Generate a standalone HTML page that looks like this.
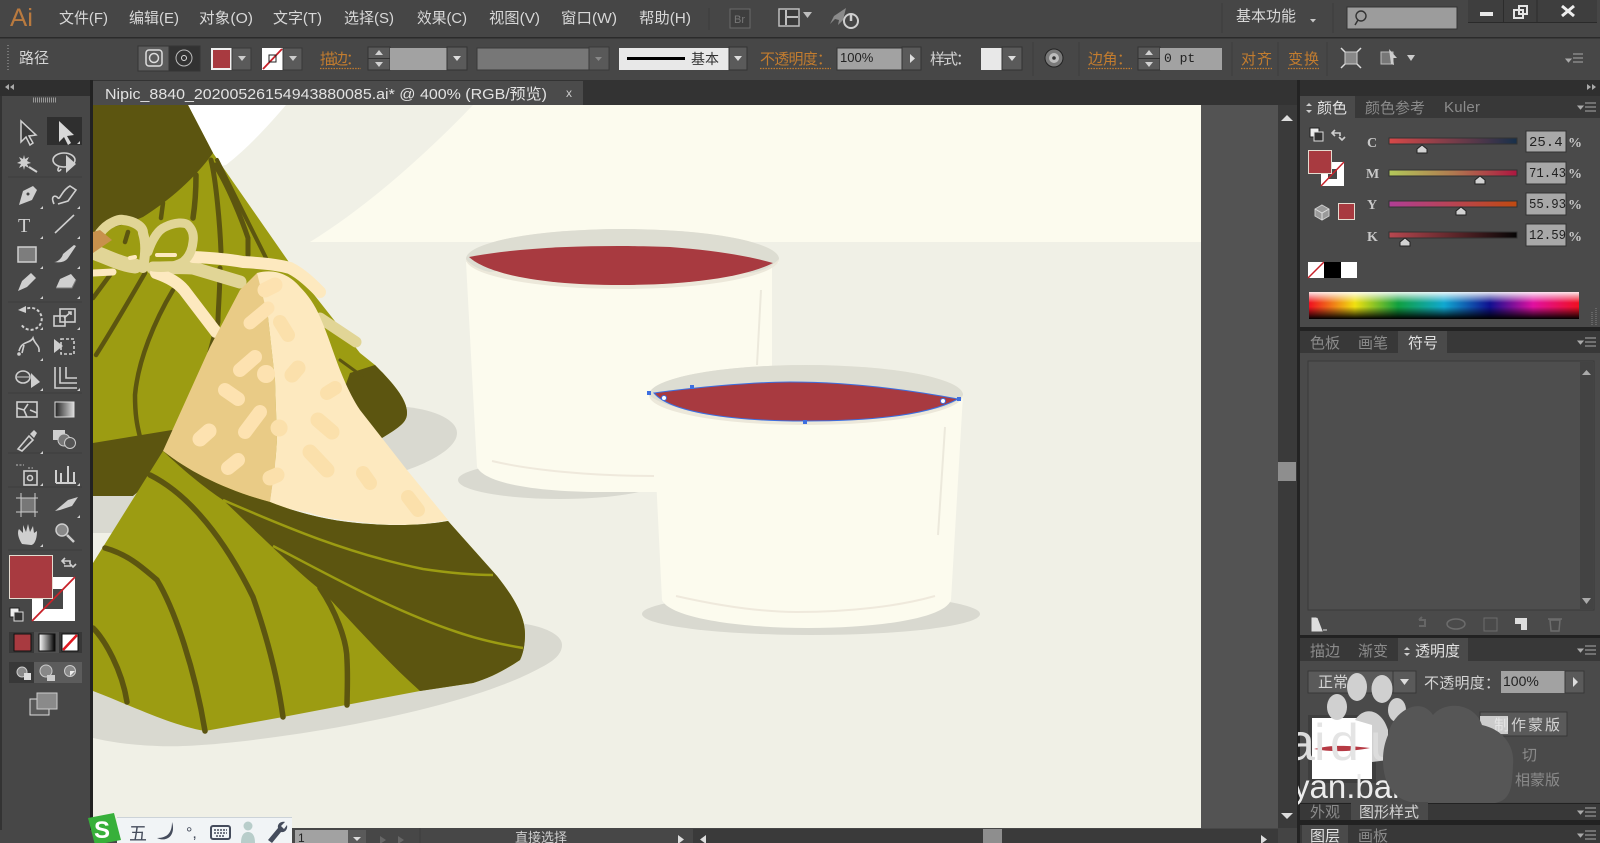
<!DOCTYPE html>
<html lang="zh"><head><meta charset="utf-8"><title>Adobe Illustrator</title>
<style>
html,body{margin:0;padding:0;width:1600px;height:843px;overflow:hidden;background:#474747}
svg{display:block;position:absolute;left:0;top:0;filter:blur(.35px)}
text{font-family:"Liberation Sans","Noto Sans CJK SC",sans-serif}
.m{font-size:15px;fill:#d8d8d8}
.o{font-size:15px;fill:#c27c2f}
.w{font-size:15px;fill:#d4d4d4}
.t{font-size:15px;fill:#8b8b8b}
.a{font-size:15px;fill:#e2e2e2}
.ic{fill:none;stroke:#cfcfcf;stroke-width:1.6}
.f{fill:#cfcfcf}
.sep{stroke:#3c3c3c;stroke-width:1}
.leaf{fill:none;stroke:#5c5510;stroke-linecap:round}
.str{fill:none;stroke-linecap:round;stroke-linejoin:round}
</style></head><body>
<svg width="1600" height="843" viewBox="0 0 1600 843" xmlns="http://www.w3.org/2000/svg">
<defs>
<linearGradient id="gr" x1="0" x2="1" y1="0" y2="0"><stop offset="0" stop-color="#222"/><stop offset="1" stop-color="#ddd"/></linearGradient>
<linearGradient id="gb" x1="0" x2="1" y1="0" y2="0"><stop offset="0" stop-color="#fff"/><stop offset="1" stop-color="#000"/></linearGradient>
<linearGradient id="c" x1="0" x2="1"><stop offset="0" stop-color="#d84848"/><stop offset="1" stop-color="#17304a"/></linearGradient>
<linearGradient id="mm" x1="0" x2="1"><stop offset="0" stop-color="#b3c95a"/><stop offset=".5" stop-color="#b07a50"/><stop offset="1" stop-color="#ad1640"/></linearGradient>
<linearGradient id="y" x1="0" x2="1"><stop offset="0" stop-color="#b03e96"/><stop offset="1" stop-color="#c04a10"/></linearGradient>
<linearGradient id="k" x1="0" x2="1"><stop offset="0" stop-color="#b84850"/><stop offset="1" stop-color="#050505"/></linearGradient>
<linearGradient id="sp" x1="0" x2="1"><stop offset="0" stop-color="#f01020"/><stop offset=".17" stop-color="#f0e010"/><stop offset=".33" stop-color="#10a040"/><stop offset=".5" stop-color="#10a8d0"/><stop offset=".67" stop-color="#101090"/><stop offset=".83" stop-color="#e010a0"/><stop offset="1" stop-color="#f01020"/></linearGradient>
<linearGradient id="sw" x1="0" x2="0" y1="0" y2="1"><stop offset="0" stop-color="#fff" stop-opacity=".9"/><stop offset=".4" stop-color="#fff" stop-opacity="0"/><stop offset=".55" stop-color="#000" stop-opacity="0"/><stop offset="1" stop-color="#000"/></linearGradient>
<clipPath id="art"><rect x="93" y="105" width="1108" height="725"/></clipPath>
<clipPath id="wm"><rect x="1298" y="660" width="302" height="183"/></clipPath>
</defs>

<!-- base -->
<rect width="1600" height="843" fill="#474747"/>
<rect y="0" width="1600" height="37" fill="#464646"/>
<rect y="37" width="1600" height="1.5" fill="#2b2b2b"/>
<rect y="38.500" width="1600" height="41.500" fill="#474747"/>
<rect y="80" width="1600" height="25" fill="#333"/>

<!-- title bar -->
<text x="10" y="26" fill="#b97a3f" style="font-size:25px" textLength="23" lengthAdjust="spacingAndGlyphs">Ai</text>
<text class="m" x="59" y="23" textLength="49" lengthAdjust="spacingAndGlyphs">文件(F)</text>
<text class="m" x="129" y="23" textLength="50" lengthAdjust="spacingAndGlyphs">编辑(E)</text>
<text class="m" x="199" y="23" textLength="54" lengthAdjust="spacingAndGlyphs">对象(O)</text>
<text class="m" x="273" y="23" textLength="49" lengthAdjust="spacingAndGlyphs">文字(T)</text>
<text class="m" x="344" y="23" textLength="50" lengthAdjust="spacingAndGlyphs">选择(S)</text>
<text class="m" x="417" y="23" textLength="50" lengthAdjust="spacingAndGlyphs">效果(C)</text>
<text class="m" x="489" y="23" textLength="51" lengthAdjust="spacingAndGlyphs">视图(V)</text>
<text class="m" x="561" y="23" textLength="56" lengthAdjust="spacingAndGlyphs">窗口(W)</text>
<text class="m" x="639" y="23" textLength="52" lengthAdjust="spacingAndGlyphs">帮助(H)</text>
<path class="sep" d="M709 8V30M1222 3V33M1333 3V33"/>
<rect x="730" y="9" width="20" height="19" fill="#3e3e3e" stroke="#6a6a6a"/>
<text x="734" y="23" style="font-size:11px" fill="#777">Br</text>
<rect x="779" y="9" width="20" height="17" fill="#3a3a3a" stroke="#bdbdbd" stroke-width="1.5"/><path d="M786 10v15M786 17h12" stroke="#bdbdbd" stroke-width="2"/>
<path d="M803 12h9l-4.500 6z" fill="#bdbdbd"/>
<path d="M830 24l4-8 12-8-3 12-5 5 1-5-4-1z" fill="#8a8a8a"/>
<circle cx="851" cy="21" r="7" fill="none" stroke="#cfcfcf" stroke-width="2"/><path d="M851 15v6" stroke="#cfcfcf" stroke-width="2.500"/>
<text class="m" x="1236" y="21" textLength="60" lengthAdjust="spacingAndGlyphs">基本功能</text>
<path d="M1310 19h6l-3 3.500z" fill="#c8c8c8"/>
<rect x="1347" y="7" width="110" height="22" fill="#9c9c9c" stroke="#333"/>
<circle cx="1361" cy="16" r="5" fill="none" stroke="#333" stroke-width="1.400"/><path d="M1358 20l-3 5" stroke="#333" stroke-width="1.500"/>
<rect x="1468" y="0" width="129" height="22" fill="#3e3e3e"/>
<path d="M1503.500 0v22M1537 0v22" stroke="#2c2c2c"/><rect x="1468" y="22" width="129" height="1" fill="#2a2a2a"/>
<rect x="1480" y="12" width="13" height="4" fill="#e8e8e8"/>
<rect x="1514" y="10" width="9" height="8" fill="none" stroke="#e4e4e4" stroke-width="2"/><rect x="1519" y="6" width="8" height="8" fill="none" stroke="#e4e4e4" stroke-width="2"/>
<path d="M1562 6L1574 16M1574 6L1562 16" stroke="#eee" stroke-width="3"/>

<!-- control bar -->
<path d="M8 45V71" stroke="#777" stroke-width="2" stroke-dasharray="1 2"/>
<text x="19" y="63" class="w">路径</text>
<rect x="138" y="46" width="31" height="25" fill="#5c5c5c" stroke="#353535"/><rect x="169" y="46" width="31" height="25" fill="#323232" stroke="#353535"/>
<rect x="146" y="50" width="16" height="16" rx="3" fill="none" stroke="#ddd" stroke-width="1.500"/><circle cx="154" cy="58" r="4.500" fill="none" stroke="#ddd" stroke-width="1.500"/>
<circle cx="184" cy="58" r="8" fill="none" stroke="#bbb"/><circle cx="184" cy="58" r="2.500" fill="none" stroke="#ddd"/>
<rect x="211" y="48" width="21" height="22" fill="#f0f0f0"/><rect x="213" y="50" width="17" height="18" fill="#a83a40"/>
<rect x="232" y="48" width="19" height="22" fill="#5a5a5a" stroke="#383838"/><path d="M238 56h8l-4 5z" fill="#ccc"/>
<rect x="262" y="48" width="21" height="22" fill="#fff"/><path d="M263 69L282 49" stroke="#c8222a" stroke-width="1.800"/><rect x="269" y="55" width="7" height="7" fill="none" stroke="#222"/>
<rect x="283" y="48" width="19" height="22" fill="#5a5a5a" stroke="#383838"/><path d="M289 56h8l-4 5z" fill="#ccc"/>
<text class="o" x="320" y="64" textLength="41">描边：</text>
<rect x="368" y="47" width="22" height="23" fill="#5a5a5a" stroke="#333"/><path d="M368 58.500h22" stroke="#333"/><path d="M375 55l4-5 4 5zM375 62l4 5 4-5z" fill="#d0d0d0"/>
<rect x="390" y="48" width="57" height="22" fill="#a2a2a2"/>
<rect x="447" y="47" width="20" height="23" fill="#5a5a5a" stroke="#333"/><path d="M453 56h8l-4 5z" fill="#ddd"/>
<rect x="477" y="48" width="112" height="22" fill="#777" stroke="#3a3a3a"/>
<rect x="589" y="47" width="20" height="23" fill="#595959" stroke="#3a3a3a"/><path d="M595 57h7l-3.500 4z" fill="#888"/>
<rect x="619" y="48" width="110" height="22" fill="#e8e8e8"/><rect x="627" y="57" width="58" height="3" fill="#000"/>
<text x="691" y="64" style="font-size:14px" fill="#333">基本</text>
<rect x="729" y="47" width="18" height="23" fill="#5a5a5a" stroke="#333"/><path d="M734 56h8l-4 5z" fill="#ddd"/>
<text class="o" x="760" y="64" textLength="72">不透明度：</text>
<rect x="837" y="48" width="65" height="22" fill="#a2a2a2" stroke="#333"/><text x="840" y="62" style="font-size:13px" fill="#222">100%</text>
<rect x="902" y="47" width="19" height="23" fill="#5a5a5a" stroke="#333"/><path d="M910 54l5 4.500-5 4.500z" fill="#ddd"/>
<text class="w" x="930" y="64" textLength="41">样式：</text>
<rect x="981" y="48" width="21" height="22" fill="#e8e8e8"/>
<rect x="1002" y="47" width="20" height="23" fill="#5a5a5a" stroke="#333"/><path d="M1008 56h8l-4 5z" fill="#ddd"/>
<path class="sep" d="M1033 42V76M1079 42V76M1232 42V76M1278 42V76M1327 42V76"/>
<circle cx="1054" cy="58" r="9" fill="#7a7a7a" stroke="#222"/><circle cx="1054" cy="58" r="5" fill="#bdbdbd"/><circle cx="1054" cy="58" r="1.800" fill="#333"/>
<text class="o" x="1088" y="64" textLength="44">边角：</text>
<rect x="1138" y="47" width="22" height="23" fill="#5a5a5a" stroke="#333"/><path d="M1138 58.500h22" stroke="#333"/><path d="M1145 55l4-5 4 5zM1145 62l4 5 4-5z" fill="#d0d0d0"/>
<rect x="1160" y="48" width="62" height="22" fill="#a2a2a2"/><text x="1164" y="62" style="font-size:13px;font-family:'Liberation Mono',monospace" fill="#222">0 pt</text>
<text class="o" x="1241" y="64" textLength="31">对齐</text>
<text class="o" x="1288" y="64" textLength="31">变换</text>
<path d="M320 68.500h41M760 68.500h71M1088 68.500h44M1241 68.500h31M1288 68.500h31" stroke="#c27c2f" stroke-width="1.200" stroke-dasharray="1.500 1.200"/>
<rect x="1345" y="52" width="12" height="12" fill="#888" stroke="#ccc"/><path d="M1341 48l4 4M1361 48l-4 4M1341 68l4-4M1361 68l-4-4" stroke="#ddd" stroke-width="1.500"/>
<rect x="1381" y="52" width="12" height="12" fill="#777" stroke="#bbb"/><path d="M1389 49l8 9-4 0 1 7-3-1z" fill="#ccc"/>
<path d="M1407 55h8l-4 6z" fill="#ccc"/>
<path d="M1566 59l5 0-2.500 3zM1573 54h10M1573 58h10M1573 62h10" stroke="#aaa" fill="#aaa"/>

<!-- doc tab + left -->
<rect x="0" y="80" width="92" height="16" fill="#2f2f2f"/>
<path d="M9 84l-4 3 4 3zM14 84l-4 3 4 3z" fill="#aaa"/>
<rect x="0" y="96" width="92" height="734" fill="#474747"/>
<rect x="0" y="96" width="2" height="734" fill="#333"/>
<rect x="90" y="80" width="3" height="750" fill="#222"/>
<path d="M33 100h24" stroke="#999" stroke-width="5" stroke-dasharray="1 1"/>
<rect x="93" y="81" width="490" height="24" fill="#4b4b4b"/>
<text class="a" x="105" y="99" textLength="442" lengthAdjust="spacingAndGlyphs">Nipic_8840_20200526154943880085.ai* @ 400% (RGB/预览)</text>
<text x="566" y="97" style="font-size:12px" fill="#ccc">x</text>
<rect x="1275" y="80" width="25" height="25" fill="#333"/>
<rect x="1297" y="80" width="303" height="16" fill="#2f2f2f"/>
<path d="M1587 84l4 3-4 3zM1592 84l4 3-4 3z" fill="#aaa"/>

<!-- canvas -->
<rect x="93" y="105" width="1185" height="725" fill="#535353"/>
<g clip-path="url(#art)">
<rect x="93" y="105" width="1108" height="725" fill="#f0f0e6"/>
<path d="M473 105H1201V242H310C370 205 430 150 473 105Z" fill="#fcfbee"/>
<path d="M188 105H286C266 128 248 148 226 165L200 170Z" fill="#fff"/>
<!-- shadows back -->
<path d="M382 438L407 407C435 410 457 420 457 433C457 448 430 462 407 470L380 470Z" fill="#d9d9d0"/>
<path d="M93 490H180L120 533H93Z" fill="#d9d9d0"/>
<!-- back zongzi -->
<path d="M188 105L213 153L293 268L360 353L375 365C395 385 407 400 407 413C407 422 400 427 382 438L300 460H93V105Z" fill="#9c9c12"/>
<path d="M93 105H188L213 153C195 178 170 200 143 217C125 225 110 228 93 232Z" fill="#5c5510"/>
<path d="M350 373L375 365C395 385 407 400 407 413C407 422 400 427 382 438L320 455Z" fill="#5c5510"/>
<path d="M93 443L172 430L200 440L133 496H93Z" fill="#5c5510"/>
<g class="leaf" stroke-width="4.500">
<path d="M196 175C196 190 195 205 193 218" stroke-width="5.500"/>
<path d="M163 203L161 218"/>
<path d="M211 160C216 180 220 225 221 252" stroke-width="5"/>
<path d="M220 268C220 290 218 310 218 322L210 352" stroke-width="5"/>
<path d="M215 165C228 185 242 220 248 238L248 255" stroke-width="5"/>
<path d="M217 160L266 258" stroke-width="4"/>
<path d="M128 232L125 242"/>
<path d="M110 275L93 298"/>
<path d="M145 273C135 290 115 325 96 355"/>
<path d="M173 290C155 320 138 360 135 395C135 415 137 425 140 437"/>
<path d="M340 360L362 376" stroke-width="3"/>
</g>
<!-- strings behind -->
<path class="str" d="M153 268C170 268 180 267 193 268L240 282" stroke="#e1d596" stroke-width="13"/>
<path class="str" d="M320 318L356 342" stroke="#e1d596" stroke-width="11"/>
<path class="str" d="M156 273C170 278 178 283 184 290L216 332" stroke="#fde9bf" stroke-width="12"/>
<!-- rice -->
<path d="M163 451L210 347L240 290L257 273L280 285L268 317L275 380L277 440L275 467L270 503C225 490 190 472 163 451Z" fill="#e9cb86"/>
<path d="M257 273C275 268 290 275 300 287C308 295 315 305 320 317C328 335 333 352 340 370C346 385 352 398 360 410L407 470L448 520C420 526 390 526 360 522C340 520 325 518 310 513C295 510 282 508 270 503L275 467L277 440L275 380L268 317Z" fill="#fde9bf"/>
<g class="str" stroke="#fde2b0" stroke-width="14">
<path d="M240 370L255 357"/><path d="M266 374h.1" stroke-width="18"/><path d="M225 390L238 399"/><path d="M245 432L260 412"/><path d="M200 439L209 431" stroke-width="15"/><path d="M228 468L238 460"/><path d="M250 323L268 308" stroke-width="13"/><path d="M265 290L275 285" stroke-width="15"/>
</g>
<g class="str" stroke="#fbe0ab" stroke-width="14">
<path d="M280 322L288 335"/><path d="M292 375L298 368" stroke-width="15"/><path d="M327 393L335 388"/><path d="M318 420L332 432" stroke-width="15"/><path d="M279 428h.1" stroke-width="17"/><path d="M310 452L327 470" stroke-width="15"/><path d="M270 478L277 475" stroke-width="15"/><path d="M363 473L370 483"/><path d="M408 497L418 510"/>
</g>
<!-- strings front -->
<path class="str" d="M193 257C215 258 232 260 243 262C262 263 280 265 290 268C302 274 312 284 320 292" stroke="#fde9bf" stroke-width="12"/>
<path class="str" d="M100 233C108 222 120 219 123 220C133 221 143 226 143 233C146 243 146 252 143 268" stroke="#e1d596" stroke-width="10"/>
<path class="str" d="M148 252C152 240 158 230 165 227C175 222 185 222 188 225C193 230 194 236 193 242C192 252 188 258 183 262C172 268 162 268 153 267" stroke="#e1d596" stroke-width="9"/>
<path class="str" d="M93 252C110 258 120 264 135 266" stroke="#e1d596" stroke-width="15"/>
<path class="str" d="M93 273L113 272" stroke="#fde9bf" stroke-width="7"/>
<path class="str" d="M130 258L135 257M157 255L175 255" stroke="#fde9bf" stroke-width="4"/>
<path d="M93 232L100 230L112 240L93 253Z" fill="#c8914c"/>
<!-- shadow front -->
<path d="M510 622C545 625 562 635 562 645C562 655 552 662 540 668C500 690 430 710 350 725C280 738 200 748 157 746C130 745 110 742 93 738V690Z" fill="#d9d9d0"/>
<!-- front zongzi -->
<path d="M163 451C190 472 225 490 270 502C295 512 325 520 357 523C390 526 420 526 448 521L497 576C512 595 525 615 525 634C525 648 522 656 520 660C505 670 490 678 473 683L420 691L283 717L205 731C170 725 130 705 93 691V563Z" fill="#9c9c12"/>
<path d="M163 451C190 472 225 490 270 502C295 512 325 520 357 523C390 526 420 526 448 521L497 576C512 595 525 615 525 634C525 648 522 656 520 660C505 670 490 678 473 683L420 691C385 660 355 625 323 592C295 570 255 530 223 500C205 488 183 470 163 451Z" fill="#5c5510"/>
<g class="leaf" stroke-width="5.500">
<path d="M150 475C190 495 225 540 253 597C268 640 278 680 283 717"/>
<path d="M105 548C130 555 145 570 157 580C175 610 195 670 205 731"/>
<path d="M93 628C105 640 122 670 127 702"/>
<path d="M320 588C335 610 347 640 347 660C348 680 347 695 347 705"/>
</g>
<path d="M223 500C270 520 340 552 423 569C450 573 475 575 493 575" fill="none" stroke="#9c9c12" stroke-width="2.500"/>
<path d="M273 546C320 570 390 610 457 632C480 640 505 645 523 648" fill="none" stroke="#9c9c12" stroke-width="2.500"/>

<!-- back cup -->
<ellipse cx="560" cy="480" rx="102" ry="19" fill="#d9d9d0"/>
<path d="M466 262L477 467C485 484 540 492 600 492H772V267L779 262Z" fill="#fcfbee"/>
<ellipse cx="622.500" cy="259" rx="156.500" ry="30" fill="#ece8da"/>
<path d="M466 259A156.500 30 0 0 1 779 259C770 268 760 272 750 273C650 260 560 262 490 272C480 270 470 265 466 259Z" fill="#ddddd2"/>
<path d="M469 257C530 245 620 245 670 247C710 250 745 255 773 263C745 277 690 285 620 285C550 285 490 276 469 257Z" fill="#a83a40"/>
<path d="M761 290L757 365" stroke="#ece9dc" stroke-width="2" fill="none"/>
<path d="M492 461C530 470 590 476 654 476" stroke="#efe9dc" stroke-width="2" fill="none"/>
<!-- front cup -->
<ellipse cx="811" cy="614" rx="169" ry="21" fill="#d9d9d0"/>
<path d="M652 395L662 600C670 618 740 628 808 628C880 628 945 618 951 600L963 395Z" fill="#fcfbee"/>
<ellipse cx="806" cy="395" rx="157" ry="30" fill="#ece8da"/>
<path d="M649 395A157 30 0 0 1 963 395C955 404 945 408 930 410C850 395 730 395 680 408C665 405 655 400 649 395Z" fill="#ddddd2"/>
<path d="M654 393C690 388 750 382 790 382C850 382 910 390 958 399C930 414 880 421 805 421C730 421 670 412 654 393Z" fill="#a83a40"/>
<path d="M654 393C690 388 750 382 790 382C850 382 910 390 958 399C930 414 880 421 805 421C730 421 670 412 654 393Z" fill="none" stroke="#3d6fe0" stroke-width="1"/>
<g fill="#3d6fe0"><rect x="647" y="391" width="4" height="4"/><rect x="690" y="385" width="4" height="4"/><rect x="803" y="420" width="4" height="4"/><rect x="957" y="397" width="4" height="4"/></g>
<circle cx="664" cy="398" r="2.500" fill="#fff" stroke="#3d6fe0"/><circle cx="943" cy="401" r="2.500" fill="#fff" stroke="#3d6fe0"/>
<path d="M945 427L938 535" stroke="#ece9dc" stroke-width="2" fill="none"/>
<path d="M676 596C720 606 760 612 797 612C850 612 900 606 935 596" stroke="#efe9dc" stroke-width="2" fill="none"/>
</g>

<!-- canvas scrollbar -->
<rect x="1278" y="105" width="19" height="725" fill="#3a3a3a"/>
<rect x="1297" y="80" width="3" height="763" fill="#232323"/>
<path d="M1281 121l6-6 6 6z" fill="#ddd"/>
<rect x="1278" y="462" width="18" height="19" fill="#8e8e8e"/>
<path d="M1281 813h12l-6 6z" fill="#ddd"/>

<!-- tools -->
<rect x="47" y="117" width="35" height="28" fill="#2f2f2f"/>
<path class="sep" d="M8 177H82M8 302H82M8 393H82M8 453H82M8 487H82M8 550H82"/>
<g>
<path d="M21 121V142L26 137L30 145L33 143L29 136L36 135Z" fill="#3a3a3a" stroke="#d0d0d0" stroke-width="1.500"/>
<path d="M59 121V142L64 137L68 145L71 143L67 136L74 135Z" fill="#d8d8d8"/>
<path d="M24 155l1 4 4-2-2 4 4 2-4 1 2 4-4-2-1 4-1-4-4 2 2-4-4-1 4-2-2-4 4 2z" class="f"/><path d="M29 167L37 172" stroke="#cfcfcf" stroke-width="2"/>
<ellipse cx="64" cy="160" rx="11" ry="7" class="ic"/><path d="M59 167C56 172 60 172 61 169" class="ic"/><path d="M66 155L66 173L76 164Z" class="f"/>
<path d="M19 205L23 191L33 186L37 190L32 200Z" class="f"/><circle cx="28" cy="194" r="1.500" fill="#444"/>
<path d="M54 204C50 195 56 195 58 198C60 200 62 190 70 186L76 190L68 201L58 204" class="ic"/>
<text x="18" y="232" style="font-size:20px;font-family:'Liberation Serif',serif" fill="#cfcfcf">T</text>
<path d="M55 233L74 215" stroke="#cfcfcf" stroke-width="1.600"/>
<rect x="18" y="247" width="18" height="15" fill="#7d7d7d" stroke="#cfcfcf" stroke-width="1.500"/>
<path d="M54 262C58 262 62 258 63 254L74 245L76 246L68 258C65 262 60 263 54 262Z" class="f"/>
<path d="M18 291L22 281L31 273L36 278L27 287Z" class="f"/>
<path d="M56 288L60 279L71 274L76 280L72 288Z" class="f"/><path d="M56 288L72 288L76 280" fill="none" stroke="#777"/>
<path d="M23 311A11 11 0 1 1 21 324" stroke-width="2" stroke="#cfcfcf" fill="none" stroke-dasharray="3 2"/><path d="M18 310l8-4v7z" class="f"/>
<rect x="54" y="316" width="11" height="10" class="ic"/><rect x="60" y="309" width="15" height="13" class="ic"/><path d="M64 318l7-6m-3 0h3v3" class="ic"/>
<path d="M19 351C22 340 30 344 33 338C35 345 40 345 39 352M24 345L22 353" class="ic" stroke-width="2"/><circle cx="19" cy="354" r="1.800" class="f"/>
<rect x="61" y="339" width="13" height="15" class="ic" stroke-dasharray="3 2"/><path d="M54 339L54 353L63 346Z" class="f"/>
<ellipse cx="23" cy="377" rx="7" ry="6" class="ic"/><path d="M17 377h12" stroke="#cfcfcf"/><path d="M31 373L31 388L40 382Z" class="f"/>
<path d="M55 367V388H77M60 367V383H77M66 367V378H77" class="ic"/>
<rect x="17" y="402" width="20" height="15" class="ic"/><path d="M17 408L24 410L28 404M24 410L27 417M30 410L37 413" class="ic" stroke-width="1"/>
<rect x="55" y="402" width="19" height="15" fill="url(#gr)" stroke="#ddd"/>
<path d="M18 449L29 436L33 440L22 451Z" class="ic"/><path d="M30 434L34 430L37 433L34 438Z" class="f"/>
<rect x="53" y="430" width="12" height="10" class="f"/><circle cx="64" cy="440" r="6" fill="#777" stroke="#ccc"/><circle cx="70" cy="443" r="5.500" fill="#555" stroke="#ccc"/>
<rect x="24" y="471" width="13" height="14" class="ic"/><circle cx="30" cy="478" r="2.500" class="ic"/><path d="M16 465h8M28 468h5" stroke="#bbb" stroke-dasharray="2 1.500"/>
<path d="M56 483V470M61 483V473M56 483H76M68 483V466M74 483V472" stroke="#cfcfcf" stroke-width="2" fill="none"/>
<rect x="21" y="498" width="14" height="14" fill="#777" stroke="#ccc"/><path d="M16 498h22M16 512h22M21 493v24M35 493v24" stroke="#ccc"/>
<path d="M55 511L68 500L78 497L72 506L60 510Z" class="f"/>
<path d="M22 544C18 538 17 532 19 529L23 533L23 525L26 532L28 524L30 532L33 526L34 533L37 531C37 540 34 545 31 545Z" class="f"/>
<circle cx="62" cy="530" r="6" fill="#888" stroke="#ccc" stroke-width="1.500"/><path d="M67 535L74 542" stroke="#ccc" stroke-width="2.500"/>
<!-- corner marks -->
<path class="f" d="M80 141v3h-3zM43 206v3h-3zM80 206v3h-3zM43 236v3h-3zM80 236v3h-3zM43 266v3h-3zM80 266v3h-3zM43 296v3h-3zM80 296v3h-3zM43 327v3h-3zM80 327v3h-3zM43 358v3h-3zM80 388v3h-3zM43 388v3h-3zM43 451v3h-3zM43 483v3h-3zM80 483v3h-3zM80 515v3h-3zM43 544v3h-3z"/>
</g>
<!-- fill/stroke -->
<rect x="32" y="577" width="43" height="44" fill="#fff"/><rect x="43" y="589" width="20" height="20" fill="#474747"/>
<path d="M32 621L75 577" stroke="#c8222a" stroke-width="1.800"/>
<rect x="9.500" y="555.500" width="43" height="43" fill="#a83a40" stroke="#e4dcd0"/>
<path d="M65 558l-3 3 3 3M62 561h8v3M76 564l-3 3-3-3M71 566h-7" class="ic" stroke-width="1.500"/>
<rect x="10" y="608" width="9" height="9" fill="#eee" stroke="#222"/><rect x="14" y="612" width="9" height="9" fill="#333" stroke="#ddd"/>
<rect x="9" y="632" width="73" height="21" fill="#373737"/><rect x="34" y="632" width="25" height="21" fill="#505050"/>
<rect x="14" y="634" width="17" height="17" fill="#a83a40" stroke="#111"/>
<rect x="39" y="634" width="16" height="17" fill="url(#gb)" stroke="#111"/>
<rect x="62" y="634" width="16" height="17" fill="#fff" stroke="#111"/><path d="M63 650L77 635" stroke="#e01820" stroke-width="2.500"/>
<rect x="9" y="662" width="73" height="21" fill="#5c5c5c"/><rect x="9" y="662" width="25" height="21" fill="#383838"/>
<circle cx="22" cy="672" r="5" fill="#8a8a8a" stroke="#ccc"/><rect x="24" y="673" width="7" height="7" fill="#ddd"/>
<circle cx="46" cy="671" r="6" fill="#888" stroke="#ccc"/><rect x="47" y="675" width="8" height="6" fill="#ccc"/>
<circle cx="70" cy="671" r="5.500" fill="#888" stroke="#ccc"/><path d="M70 671h5l-5 5z" fill="#eee"/>
<rect x="30" y="699" width="19" height="16" fill="#5a5a5a" stroke="#ddd"/><rect x="37" y="693" width="20" height="16" fill="#8a8a8a" stroke="#ccc"/>

<!-- color panel -->
<rect x="1300" y="96" width="300" height="22" fill="#383838"/>
<rect x="1300" y="118" width="300" height="209" fill="#4a4a4a"/>
<rect x="1300" y="96" width="55" height="22" fill="#4a4a4a"/>
<path d="M1306 106l3-3 3 3zM1306 110l3 3 3-3z" fill="#ccc"/>
<text x="1317" y="113" class="a">颜色</text>
<text x="1365" y="113" class="t">颜色参考</text>
<text x="1444" y="112" class="t" textLength="36">Kuler</text>
<path d="M1578 106h5l-2.500 3zM1585 103h11M1585 107h11M1585 111h11" fill="#aaa" stroke="#aaa"/>
<rect x="1310" y="128" width="9" height="9" fill="#eee" stroke="#222"/><rect x="1314" y="132" width="9" height="9" fill="#333" stroke="#ddd"/>
<path d="M1335 130l-3 3 3 3M1332 133h8v3M1345 137l-3 3-3-3" class="ic" stroke-width="1.300"/>
<rect x="1321" y="162" width="23" height="24" fill="#fff"/><rect x="1328" y="169" width="9" height="10" fill="#474747"/><path d="M1321 186L1344 162" stroke="#c8222a" stroke-width="1.500"/>
<rect x="1308.500" y="150.500" width="23" height="23" fill="#a83a40" stroke="#e4dcd0"/>
<path d="M1322 205l7 4v7l-7 4-7-4v-7z" fill="#9a9a9a" stroke="#ccc"/><path d="M1315 209l7 4 7-4M1322 213v7" stroke="#ddd" fill="none"/>
<rect x="1338.500" y="203.500" width="16" height="16" fill="#a83a40" stroke="#e4dcd0"/>
<g style="font-size:14px;font-weight:bold" fill="#c8c8c8">
<text x="1367" y="147" style="font-family:'Liberation Serif',serif">C</text><text x="1366" y="178" style="font-family:'Liberation Serif',serif">M</text><text x="1367" y="209" style="font-family:'Liberation Serif',serif">Y</text><text x="1367" y="241" style="font-family:'Liberation Serif',serif">K</text>
<text x="1568" y="147" style="font-family:'Liberation Serif',serif">%</text><text x="1568" y="178" style="font-family:'Liberation Serif',serif">%</text><text x="1568" y="209" style="font-family:'Liberation Serif',serif">%</text><text x="1568" y="241" style="font-family:'Liberation Serif',serif">%</text>
</g>
<rect x="1389" y="138" width="128" height="6" fill="url(#c)" stroke="#333"/>
<rect x="1389" y="170" width="128" height="6" fill="url(#mm)" stroke="#333"/>
<rect x="1389" y="201" width="128" height="6" fill="url(#y)" stroke="#333"/>
<rect x="1389" y="232" width="128" height="6" fill="url(#k)" stroke="#333"/>
<path d="M1417 153v-4l5-4 5 4v4zM1475 184v-4l5-4 5 4v4zM1456 215v-4l5-4 5 4v4zM1400 246v-4l5-4 5 4v4z" fill="#d2d2d2" stroke="#222"/>
<g fill="#a8a8a8" stroke="#333"><rect x="1526" y="131" width="40" height="21"/><rect x="1526" y="162" width="40" height="22"/><rect x="1526" y="193" width="40" height="22"/><rect x="1526" y="224" width="40" height="22"/></g>
<text x="1529" y="146" fill="#222" style="font-size:14px;font-family:'Liberation Mono',monospace">25.4</text>
<text x="1529" y="177" fill="#222" style="font-size:14px;font-family:'Liberation Mono',monospace" textLength="37" lengthAdjust="spacingAndGlyphs">71.43</text>
<text x="1529" y="208" fill="#222" style="font-size:14px;font-family:'Liberation Mono',monospace" textLength="37" lengthAdjust="spacingAndGlyphs">55.93</text>
<text x="1529" y="239" fill="#222" style="font-size:14px;font-family:'Liberation Mono',monospace" textLength="37" lengthAdjust="spacingAndGlyphs">12.59</text>
<rect x="1308" y="262" width="16" height="16" fill="#fff"/><path d="M1308 278L1324 262" stroke="#c8222a" stroke-width="1.500"/>
<rect x="1324" y="262" width="17" height="16" fill="#000"/><rect x="1341" y="262" width="16" height="16" fill="#fff"/>
<rect x="1309" y="292" width="270" height="27" fill="url(#sp)"/><rect x="1309" y="292" width="270" height="27" fill="url(#sw)"/>
<path d="M1592 312v14M1596 308v18" stroke="#666" stroke-width="2" stroke-dasharray="1 1"/>
<rect x="1300" y="327" width="300" height="4" fill="#222"/>

<!-- symbols panel -->
<rect x="1300" y="331" width="300" height="22" fill="#383838"/>
<rect x="1300" y="353" width="300" height="282" fill="#4a4a4a"/>
<rect x="1398" y="331" width="49" height="22" fill="#4a4a4a"/>
<text x="1310" y="348" class="t">色板</text><text x="1358" y="348" class="t">画笔</text><text x="1408" y="348" class="a">符号</text>
<path d="M1578 341h5l-2.500 3zM1585 338h11M1585 342h11M1585 346h11" fill="#aaa" stroke="#aaa"/>
<rect x="1308" y="361" width="286" height="249" fill="#4e4e4e" stroke="#3a3a3a"/>
<rect x="1580" y="362" width="13" height="247" fill="#434343"/>
<path d="M1582 375l4.500-5 4.500 5zM1582 598h9l-4.500 6z" fill="#aaa"/>
<path d="M1312 631V618l4 0v13zM1317 631v-13l5 13zM1323 630h4" fill="#ddd" stroke="#ddd"/>
<path d="M1419 620h6v6h-6M1419 620l3-3" stroke="#666" stroke-width="2" fill="none"/>
<ellipse cx="1456" cy="624" rx="9" ry="5" fill="none" stroke="#6c6c6c" stroke-width="1.500"/><rect x="1484" y="618" width="13" height="13" fill="none" stroke="#6c6c6c"/>
<path d="M1515 618h12v12h-6v-6h-6z" fill="#ddd"/><path d="M1550 620h10l-1 11h-8zM1548 619h14" fill="none" stroke="#6c6c6c" stroke-width="1.500"/>
<rect x="1300" y="635" width="300" height="3" fill="#222"/>

<!-- transparency panel -->
<rect x="1300" y="638" width="300" height="23" fill="#383838"/>
<rect x="1300" y="661" width="300" height="141" fill="#4a4a4a"/>
<rect x="1398" y="638" width="70" height="23" fill="#4a4a4a"/>
<text x="1310" y="656" class="t">描边</text><text x="1358" y="656" class="t">渐变</text><text x="1415" y="656" class="a">透明度</text>
<path d="M1404 650l3-3 3 3zM1404 653l3 3 3-3z" fill="#ccc"/>
<path d="M1578 649h5l-2.500 3zM1585 646h11M1585 650h11M1585 654h11" fill="#aaa" stroke="#aaa"/>
<rect x="1308" y="671" width="108" height="22" fill="#5a5a5a" stroke="#383838"/><text x="1318" y="687" class="w">正常</text>
<path d="M1393 671v22" stroke="#383838"/><path d="M1400 679h9l-4.500 6z" fill="#ddd"/>
<text x="1424" y="688" class="w" textLength="76">不透明度：</text>
<rect x="1501" y="671" width="64" height="22" fill="#a2a2a2"/><text x="1503" y="686" style="font-size:14px" fill="#222">100%</text>
<rect x="1565" y="671" width="19" height="22" fill="#5a5a5a" stroke="#383838"/><path d="M1573 677l5 5-5 5z" fill="#ddd"/>
<rect x="1308" y="715" width="68" height="68" fill="#3e3e3e"/>
<rect x="1480" y="712" width="87" height="24" fill="#5a5a5a" stroke="#383838"/><text x="1494" y="730" class="w" textLength="66">制作蒙版</text>
<path d="M1480 716h28v18h-28z" fill="#e8e8e8" opacity=".8"/>
<text x="1522" y="760" class="t">切</text><text x="1515" y="785" class="t">相蒙版</text>
<rect x="1312" y="718" width="60" height="61" fill="#fff"/>
<path d="M1314 749C1330 745 1345 745 1370 748C1350 752 1330 752 1314 749Z" fill="#b63a44"/>
<!-- watermark -->
<g fill="#d0d0d0">
<ellipse cx="1357" cy="687" rx="10" ry="14"/><ellipse cx="1382" cy="689" rx="10.500" ry="14"/>
<ellipse cx="1337" cy="707" rx="10" ry="13"/>
<ellipse cx="1397" cy="710" rx="9" ry="12"/>
<path d="M1355 720C1365 705 1382 710 1388 730L1388 760L1372 762V725Z"/>
</g>
<g clip-path="url(#wm)">
<text x="1286" y="760" style="font-size:52px" fill="#dcdcdc">a</text>
<text x="1314" y="760" style="font-size:52px" fill="#e4e4e4">i</text>
<text x="1330" y="760" style="font-size:52px" fill="#e4e4e4">d</text>
<text x="1370" y="760" style="font-size:52px" fill="#dcdcdc">u</text>
<text x="1293" y="798" style="font-size:33px" fill="#ececec">yan.baidu</text>
</g>
<!-- cloud -->
<path d="M1388 735C1392 712 1420 695 1433 715C1445 700 1475 703 1482 725C1505 730 1515 748 1513 765C1512 785 1512 800 1495 803H1420C1395 803 1383 785 1383 760C1383 750 1385 742 1388 735Z" fill="#565656"/>

<rect x="1300" y="803" width="300" height="1" fill="#222"/>
<rect x="1300" y="804" width="300" height="16" fill="#383838"/>
<rect x="1351" y="802" width="77" height="18" fill="#4a4a4a"/>
<text x="1310" y="817" class="t">外观</text><text x="1359" y="817" class="w" textLength="60">图形样式</text>
<path d="M1578 811h5l-2.500 3zM1585 808h11M1585 812h11M1585 816h11" fill="#aaa" stroke="#aaa"/>
<rect x="1300" y="820" width="300" height="5" fill="#222"/>
<rect x="1300" y="825" width="300" height="18" fill="#383838"/>
<rect x="1302" y="825" width="46" height="18" fill="#4a4a4a"/>
<text x="1310" y="841" class="a">图层</text><text x="1358" y="841" class="t">画板</text>
<path d="M1578 834h5l-2.500 3zM1585 831h11M1585 835h11M1585 839h11" fill="#aaa" stroke="#aaa"/>

<!-- status bar -->
<rect x="93" y="828" width="1204" height="15" fill="#474747"/>
<rect x="295" y="830" width="53" height="13" fill="#a2a2a2"/><text x="298" y="842" style="font-size:12px" fill="#222">1</text>
<rect x="348" y="830" width="18" height="13" fill="#5a5a5a"/><path d="M353 837h8l-4 4z" fill="#ddd"/>
<path d="M380 836l6 4-6 4zM398 836l6 4-6 4z" fill="#666"/>
<path class="sep" d="M420 828V843"/>
<text x="515" y="842" style="font-size:13px" fill="#cfcfcf">直接选择</text>
<path d="M678 835l6 4.500-6 4.500z" fill="#ddd"/>
<rect x="693" y="829" width="585" height="14" fill="#3a3a3a"/>
<path d="M706 835l-6 4.500 6 4.500zM1261 835l6 4.500-6 4.500z" fill="#ddd"/>
<rect x="983" y="829" width="19" height="14" fill="#8e8e8e"/>
<rect x="1278" y="828" width="19" height="15" fill="#444"/>

<!-- IME bar -->
<rect x="117" y="817" width="175" height="26" fill="#f1f4f6"/>
<rect x="117" y="817" width="175" height="1" fill="#ccd3d8"/>
<path d="M88 818L114 813L121 840L95 845Z" fill="#37b03a"/>
<text x="94" y="838" style="font-size:24px;font-weight:bold" fill="#fff">S</text>
<text x="129" y="840" style="font-size:18px" fill="#454c5c">五</text>
<path d="M172 822C172 832 168 838 157 838C168 843 176 834 172 822Z" fill="#454c5c"/>
<text x="186" y="838" style="font-size:16px" fill="#454c5c">°,</text>
<rect x="211" y="826" width="19" height="13" rx="2" fill="none" stroke="#454c5c" stroke-width="2"/><path d="M214 830h13M214 833h13M216 836h9" stroke="#454c5c" stroke-dasharray="2 1" stroke-width="1.500"/>
<circle cx="248" cy="826" r="4.500" fill="#b8cdca"/><path d="M241 843C241 835 244 832 248 832C252 832 255 835 255 843Z" fill="#b8cdca"/>
<path d="M268 840L278 828C277 824 281 821 285 822L281 826L284 829L287 825C288 829 285 833 281 832L272 843Z" fill="#454c5c"/>
</svg>
</body></html>
